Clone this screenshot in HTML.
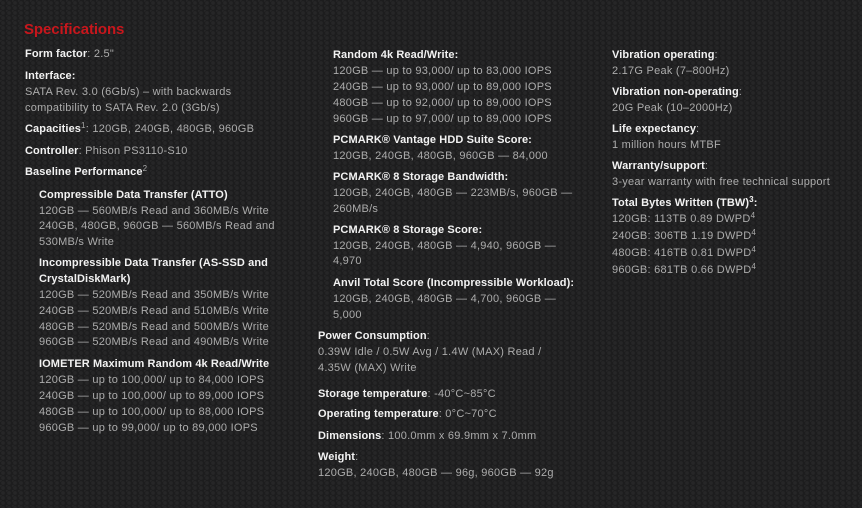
<!DOCTYPE html>
<html><head><meta charset="utf-8"><style>
html,body{margin:0;padding:0}
body{width:862px;height:508px;overflow:hidden;position:relative;font-family:"Liberation Sans",Arial,sans-serif;font-size:11px;letter-spacing:0.25px;
background-color:#1d1d1e;
background-image:radial-gradient(circle at 3px 3px,#262627 1.6px,transparent 2.2px),radial-gradient(circle at 0px 0px,#262627 1.6px,transparent 2.2px);
background-size:6px 5px;}
div{position:absolute;white-space:nowrap;line-height:14px;color:#acacac}
b{color:#f2f2f2;font-weight:bold;letter-spacing:0.1px}
sup{font-size:8px;line-height:0;vertical-align:4px}
.h{color:#c8161c;font-weight:bold;font-size:15px;line-height:18px;letter-spacing:-0.1px}
</style></head><body>
<div class="h" style="left:24px;top:21px">Specifications</div>
<div style="left:25px;top:47px"><b>Form factor</b>: 2.5"</div>
<div style="left:25px;top:69px"><b>Interface:</b></div>
<div style="left:25px;top:85px">SATA Rev. 3.0 (6Gb/s) – with backwards</div>
<div style="left:25px;top:101px">compatibility to SATA Rev. 2.0 (3Gb/s)</div>
<div style="left:25px;top:122px"><b>Capacities</b><sup>1</sup>: 120GB, 240GB, 480GB, 960GB</div>
<div style="left:25px;top:144px"><b>Controller</b>: Phison PS3110-S10</div>
<div style="left:25px;top:165px"><b>Baseline Performance</b><sup>2</sup></div>
<div style="left:39px;top:188px"><b>Compressible Data Transfer (ATTO)</b></div>
<div style="left:39px;top:204px">120GB — 560MB/s Read and 360MB/s Write</div>
<div style="left:39px;top:219px">240GB, 480GB, 960GB — 560MB/s Read and</div>
<div style="left:39px;top:235px">530MB/s Write</div>
<div style="left:39px;top:256px"><b>Incompressible Data Transfer (AS-SSD and</b></div>
<div style="left:39px;top:272px"><b>CrystalDiskMark)</b></div>
<div style="left:39px;top:288px">120GB — 520MB/s Read and 350MB/s Write</div>
<div style="left:39px;top:304px">240GB — 520MB/s Read and 510MB/s Write</div>
<div style="left:39px;top:320px">480GB — 520MB/s Read and 500MB/s Write</div>
<div style="left:39px;top:335px">960GB — 520MB/s Read and 490MB/s Write</div>
<div style="left:39px;top:357px"><b>IOMETER Maximum Random 4k Read/Write</b></div>
<div style="left:39px;top:373px">120GB — up to 100,000/ up to 84,000 IOPS</div>
<div style="left:39px;top:389px">240GB — up to 100,000/ up to 89,000 IOPS</div>
<div style="left:39px;top:405px">480GB — up to 100,000/ up to 88,000 IOPS</div>
<div style="left:39px;top:421px">960GB — up to 99,000/ up to 89,000 IOPS</div>

<div style="left:333px;top:48px"><b>Random 4k Read/Write:</b></div>
<div style="left:333px;top:64px">120GB — up to 93,000/ up to 83,000 IOPS</div>
<div style="left:333px;top:80px">240GB — up to 93,000/ up to 89,000 IOPS</div>
<div style="left:333px;top:96px">480GB — up to 92,000/ up to 89,000 IOPS</div>
<div style="left:333px;top:112px">960GB — up to 97,000/ up to 89,000 IOPS</div>
<div style="left:333px;top:133px"><b>PCMARK® Vantage HDD Suite Score:</b></div>
<div style="left:333px;top:149px">120GB, 240GB, 480GB, 960GB — 84,000</div>
<div style="left:333px;top:170px"><b>PCMARK® 8 Storage Bandwidth:</b></div>
<div style="left:333px;top:186px">120GB, 240GB, 480GB — 223MB/s, 960GB —</div>
<div style="left:333px;top:202px">260MB/s</div>
<div style="left:333px;top:223px"><b>PCMARK® 8 Storage Score:</b></div>
<div style="left:333px;top:239px">120GB, 240GB, 480GB — 4,940, 960GB —</div>
<div style="left:333px;top:254px">4,970</div>
<div style="left:333px;top:276px"><b>Anvil Total Score (Incompressible Workload):</b></div>
<div style="left:333px;top:292px">120GB, 240GB, 480GB — 4,700, 960GB —</div>
<div style="left:333px;top:308px">5,000</div>
<div style="left:318px;top:329px"><b>Power Consumption</b>:</div>
<div style="left:318px;top:345px">0.39W Idle / 0.5W Avg / 1.4W (MAX) Read /</div>
<div style="left:318px;top:361px">4.35W (MAX) Write</div>
<div style="left:318px;top:387px"><b>Storage temperature</b>: -40°C~85°C</div>
<div style="left:318px;top:407px"><b>Operating temperature</b>: 0°C~70°C</div>
<div style="left:318px;top:429px"><b>Dimensions</b>: 100.0mm x 69.9mm x 7.0mm</div>
<div style="left:318px;top:450px"><b>Weight</b>:</div>
<div style="left:318px;top:466px">120GB, 240GB, 480GB — 96g, 960GB — 92g</div>

<div style="left:612px;top:48px"><b>Vibration operating</b>:</div>
<div style="left:612px;top:64px">2.17G Peak (7–800Hz)</div>
<div style="left:612px;top:85px"><b>Vibration non-operating</b>:</div>
<div style="left:612px;top:101px">20G Peak (10–2000Hz)</div>
<div style="left:612px;top:122px"><b>Life expectancy</b>:</div>
<div style="left:612px;top:138px">1 million hours MTBF</div>
<div style="left:612px;top:159px"><b>Warranty/support</b>:</div>
<div style="left:612px;top:175px">3-year warranty with free technical support</div>
<div style="left:612px;top:196px"><b>Total Bytes Written (TBW)<sup>3</sup>:</b></div>
<div style="left:612px;top:212px">120GB: 113TB 0.89 DWPD<sup>4</sup></div>
<div style="left:612px;top:229px">240GB: 306TB 1.19 DWPD<sup>4</sup></div>
<div style="left:612px;top:246px">480GB: 416TB 0.81 DWPD<sup>4</sup></div>
<div style="left:612px;top:263px">960GB: 681TB 0.66 DWPD<sup>4</sup></div>
</body></html>
